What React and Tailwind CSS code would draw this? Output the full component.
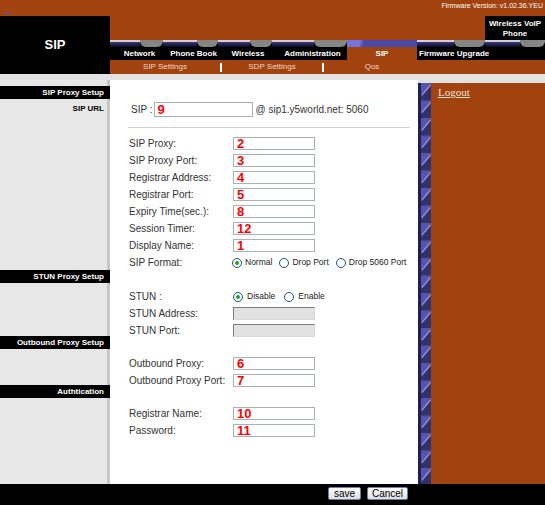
function Field({ label, value, disabled }) {
  return (
    <div className="flex h-[17px] items-center">
      <span className="w-[104px] text-[10px] text-[#333]">{label}</span>
      {disabled ? (
        <div className="h-[13px] w-[82px] border border-t-[#7a7a7a] border-l-[#7a7a7a] border-r-[#d8d8d8] border-b-[#d8d8d8] bg-[#e2e2e2]" />
      ) : (
        <div className="flex h-[13px] w-[82px] items-center border border-[#a9b0b6] bg-white pl-[3px] text-[13px] font-bold leading-none text-[#ff0000]">
          {value}
        </div>
      )}
    </div>
  );
}

function Radio({ checked, label, className = "" }) {
  return (
    <span className={"flex items-center gap-[3px] text-[8.5px] text-[#222] " + className}>
      <span className="flex h-[10px] w-[10px] items-center justify-center rounded-full border border-[#1c5180] bg-white">
        {checked && <span className="h-[4px] w-[4px] rounded-full bg-[#21a121]" />}
      </span>
      {label}
    </span>
  );
}

function SideBar({ children, className = "" }) {
  return (
    <div className={"flex h-[13px] items-center justify-end bg-black pr-[6px] text-[8px] font-bold text-white " + className}>
      {children}
    </div>
  );
}

function Navy({ w }) {
  return <div className="h-[7px] shrink-0 border-t-2 border-[#cfd0dc] bg-[linear-gradient(#3a3a78,#0a0a22)]" style={{ width: w }} />;
}

function Bump({ w }) {
  return <div className="h-[7px] shrink-0 rounded-b-[6px] bg-[#858585]" style={{ width: w }} />;
}

export default function App() {
  return (
    <div className="h-[505px] w-[545px] overflow-hidden bg-white font-['Liberation_Sans',Arial,sans-serif]">
      {/* header */}
      <div className="flex">
        <div className="w-[110px] shrink-0">
          <div className="h-[16px] bg-[#a1420f] pl-[4px] pt-[12px]">
            <div className="h-[1px] w-[7px] bg-[#4a5ad0]" />
          </div>
          <div className="flex h-[58px] items-center justify-center bg-black text-[13px] font-bold text-white">SIP</div>
        </div>
        <div className="flex-1">
          <div className="flex h-[40px] flex-col bg-[#a1420f]">
            <div className="flex h-[16px] justify-end pr-[2px] text-[7px] leading-[11px] text-white">Firmware Version: v1.02.36.YEU</div>
            <div className="ml-auto h-[24px] w-[60px] bg-black pt-[3px] text-center text-[8px] font-bold leading-[10px] text-white">
              Wireless VoIP
              <br />
              Phone
            </div>
          </div>
          <div className="flex h-[7px] bg-black">
            <Navy w={30} />
            <Bump w={23} />
            <Navy w={34} />
            <Bump w={21} />
            <Navy w={32} />
            <Bump w={22} />
            <Navy w={42} />
            <Bump w={33} />
            <div className="h-[7px] w-[70px] shrink-0 bg-[linear-gradient(100deg,#7474dc_18%,#4a4aa6_24%)]" />
            <Navy w={37} />
            <Bump w={31} />
            <Navy w={35} />
            <Bump w={25} />
          </div>
          <div className="flex h-[13px] bg-black text-[8px] font-bold leading-[13px] text-white">
            <div className="w-[53px] pl-[6px] text-center">Network</div>
            <div className="w-[55px] pl-[6px] text-center">Phone Book</div>
            <div className="w-[54px] pl-[6px] text-center">Wireless</div>
            <div className="w-[75px] pl-[6px] text-center">Administration</div>
            <div className="w-[70px] bg-[#a1420f] text-center">SIP</div>
            <div className="flex-1 pl-[2px]">Firmware Upgrade</div>
          </div>
          <div className="flex h-[14px] items-center bg-[#a1420f] text-[8px] text-[#f4d8c8]">
            <div className="w-[110px] text-center">SIP Settings</div>
            <div className="h-[9px] w-[2px] bg-white" />
            <div className="w-[100px] text-center">SDP Settings</div>
            <div className="h-[9px] w-[2px] bg-white" />
            <div className="w-[96px] text-center">Qos</div>
          </div>
        </div>
      </div>
      <div className="h-[6px] bg-[#e2e2e2]" />

      {/* body */}
      <div className="flex h-[404px]">
        <aside className="w-[110px] shrink-0 bg-[#e7e7e7] shadow-[inset_-3px_0_0_#c6c6c6]">
          <SideBar className="mt-[6px]">SIP Proxy Setup</SideBar>
          <div className="mt-[3px] flex h-[14px] items-center justify-end pr-[6px] text-[8px] font-bold text-black">SIP URL</div>
          <SideBar className="mt-[154px]">STUN Proxy Setup</SideBar>
          <SideBar className="mt-[53px]">Outbound Proxy Setup</SideBar>
          <SideBar className="mt-[36px]">Authtication</SideBar>
        </aside>

        <main className="w-[308px] shrink-0 bg-white pl-[19px]">
          <div className="mt-[21px] flex h-[16px] items-center pl-[2px] text-[10px] text-[#333]">
            <span className="mr-[1px] shrink-0 whitespace-nowrap">SIP :</span>
            <div className="flex h-[15px] w-[99px] shrink-0 items-center border border-[#a9b0b6] pl-[3px] text-[13px] font-bold leading-none text-[#ff0000]">9</div>
            <span className="ml-[3px] whitespace-nowrap">@ sip1.y5world.net: 5060</span>
          </div>
          <div className="-ml-[1px] mt-[10px] w-[282px] border-t border-[#cfcfcf]" />

          <div className="mt-[7px]">
            <Field label="SIP Proxy:" value="2" />
            <Field label="SIP Proxy Port:" value="3" />
            <Field label="Registrar Address:" value="4" />
            <Field label="Registrar Port:" value="5" />
            <Field label="Expiry Time(sec.):" value="8" />
            <Field label="Session Timer:" value="12" />
            <Field label="Display Name:" value="1" />
            <div className="flex h-[17px] items-center">
              <span className="w-[103px] text-[10px] text-[#333]">SIP Format:</span>
              <Radio checked label="Normal" />
              <Radio label="Drop Port" className="ml-[7px]" />
              <Radio label="Drop 5060 Port" className="ml-[7px]" />
            </div>
          </div>

          <div className="mt-[17px]">
            <div className="flex h-[17px] items-center">
              <span className="w-[104px] text-[10px] text-[#333]">STUN :</span>
              <Radio checked label="Disable" className="gap-[4px]" />
              <Radio label="Enable" className="ml-[9px] gap-[4px]" />
            </div>
            <Field label="STUN Address:" disabled />
            <Field label="STUN Port:" disabled />
          </div>

          <div className="mt-[16px]">
            <Field label="Outbound Proxy:" value="6" />
            <Field label="Outbound Proxy Port:" value="7" />
          </div>

          <div className="mt-[16px]">
            <Field label="Registrar Name:" value="10" />
            <Field label="Password:" value="11" />
          </div>
        </main>

        <div className="flex flex-1 flex-col">
          <div className="h-[3px] bg-[#e2e2e2]" />
          <div className="flex flex-1">
            <svg className="h-full w-[13px] shrink-0">
              <defs>
                <pattern id="tile" width="13" height="17.5" patternUnits="userSpaceOnUse">
                  <rect width="13" height="17.5" fill="#31316c" />
                  <rect width="3" height="17.5" fill="#20204c" />
                  <path d="M3 0H13V2L4.5 12L3 13.5Z" fill="#5555ad" />
                  <path d="M4 12L12.5 2" stroke="#a4a4f0" strokeWidth="1" />
                </pattern>
              </defs>
              <rect width="100%" height="100%" fill="url(#tile)" />
            </svg>
            <div className="flex-1 bg-[#a1420f] pl-[7px] pt-[2px] leading-[12px]">
              <span className="font-['Liberation_Serif',serif] text-[11px] text-[#f6e6da] underline">Logout</span>
            </div>
          </div>
        </div>
      </div>

      {/* footer */}
      <div className="flex h-[21px] items-start gap-[6px] bg-black pl-[328px] pt-[3px]">
        <button className="h-[13px] w-[33px] rounded-[2px] border border-[#6a7fa8] bg-[linear-gradient(#ffffff,#dedede)] text-[10px] leading-[11px] text-black">save</button>
        <button className="h-[13px] w-[41px] rounded-[2px] border border-[#6a7fa8] bg-[linear-gradient(#ffffff,#dedede)] text-[10px] leading-[11px] text-black">Cancel</button>
      </div>
    </div>
  );
}
